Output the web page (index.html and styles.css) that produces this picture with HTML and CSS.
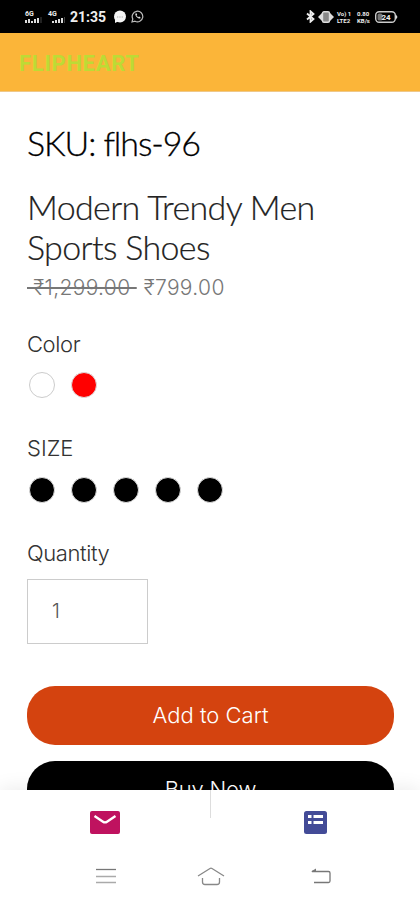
FILE: index.html
```html
<!DOCTYPE html>
<html lang="en">
<head>
  <meta charset="UTF-8">
  <meta name="viewport" content="width=device-width, initial-scale=1.0">
  <title>FLIPHEART</title>
  <link rel="stylesheet" href="styles.css">
</head>
<body>
  <div class="status-bar">
    <div class="status-left">
      <div class="signal">
        <span>6G</span>
        <svg width="17" height="6" viewBox="0 0 17 6"><path d="M1 6V3M4 6V2M7 6V4M10 6V2M13 6V1" stroke="#ddd" stroke-width="2"/><path d="M16 6V0" stroke="#444"/></svg>
      </div>
      <div class="signal second">
        <span>4G</span>
        <svg width="17" height="6" viewBox="0 0 17 6"><path d="M5 6V4M8 6V3M11 6V2M14 6V1" stroke="#ddd" stroke-width="2"/><path d="M16.5 6V0" stroke="#444"/></svg>
      </div>
      <span class="time">21:35</span>
      <svg class="chat" width="14" height="14" viewBox="0 0 14 14"><circle cx="7" cy="6.5" r="6" fill="#f5f5f5"/><path d="M2 9v4l4-2z" fill="#f5f5f5"/><path d="M4 7h6" stroke="#aaa" stroke-dasharray="1.3 1"/></svg>
      <svg class="whatsapp" width="13" height="13" viewBox="0 0 13 13" fill="none"><path d="M1 12l.8-3A5.3 5.3 0 1 1 4 11.2z" stroke="#bbb" stroke-width="1.2"/><path d="M4.5 3.5c-1 2 2.500 5.500 4.700 5l.3-1.300-1.500-.7-.8.7-1.700-1.800.7-.8-.7-1.300z" fill="#ddd"/></svg>
    </div>
    <div class="status-right">
      <svg width="9" height="13" viewBox="0 0 9 13" fill="none" stroke="#eee" stroke-width="1.800"><path d="M1 3.500l6.500 5.500-3 2.700V1.300L7.500 4 1 9.500"/></svg>
      <svg class="vibrate" width="16" height="12" viewBox="0 0 16 12"><path d="M0 6l4-4v8zM16 6l-4-4v8z" fill="#ddd"/><rect x="4.500" y=".7" width="7" height="10.600" rx="1.500" fill="#888" stroke="#ddd" stroke-width="1.400"/></svg>
      <div class="tiny volte"><span>Vo) 1</span><span>LTE2</span></div>
      <div class="tiny speed"><span>0.80</span><span>KB/s</span></div>
      <svg class="battery" width="23" height="12" viewBox="0 0 23 12"><rect x=".7" y=".7" width="19.600" height="10.600" rx="3.500" fill="none" stroke="#ccc" stroke-width="1.400"/><rect x="2.500" y="2.500" width="5" height="7" rx="1.500" fill="#777"/><path d="M21 3.500l1.500 2.500L21 8.500z" fill="#ddd"/><text x="6.500" y="9" class="battery-text">24</text></svg>
    </div>
  </div>

  <header class="app-bar">FLIPHEART</header>

  <main class="product">
    <h1 class="sku">SKU: flhs-96</h1>
    <h2 class="title">Modern Trendy Men<br>Sports Shoes</h2>
    <div class="price"><del>&nbsp;₹1,299.00&nbsp;</del><span>₹799.00</span></div>

    <div class="label color-label">Color</div>
    <div class="swatches">
      <span class="swatch white"></span>
      <span class="swatch red"></span>
    </div>

    <div class="label size-label">SIZE</div>
    <div class="swatches">
      <span class="swatch"></span>
      <span class="swatch"></span>
      <span class="swatch"></span>
      <span class="swatch"></span>
      <span class="swatch"></span>
    </div>

    <div class="label quantity-label">Quantity</div>
    <div class="quantity">1</div>

    <button class="btn add">Add to Cart</button>
    <button class="btn buy">Buy Now</button>
  </main>

  <footer class="bottom">
    <nav class="tabs">
      <div class="tab">
        <svg width="30" height="23" viewBox="0 0 30 23"><rect width="30" height="23" rx="2" fill="#bf125f"/><path d="M4.500 5L13 10.700q2 1.300 4 0L25.500 5" fill="none" stroke="#fff" stroke-width="2.400"/></svg>
      </div>
      <div class="divider"></div>
      <div class="tab">
        <svg width="23" height="23" viewBox="0 0 23 23"><rect width="23" height="23" rx="2.500" fill="#434b97"/><path d="M4 4h3.500v3H4zM9.500 4H19v3H9.500zM4 10h3.500v3H4zM9.500 10H19v3H9.500z" fill="#fff"/></svg>
      </div>
    </nav>
    <div class="system-nav">
      <svg width="20" height="16" viewBox="0 0 20 16"><path d="M0 1.500h20" stroke="#777" stroke-width="1.300"/><path d="M0 8.500h20M0 14.500h20" stroke="#aaa" stroke-width="1.500"/></svg>
      <svg class="home" width="28" height="19" viewBox="0 0 28 19" fill="none" stroke="#888" stroke-width="1.300"><path d="M1 9L13 1.500q1-.6 2 0L27 9M5.500 11v4q0 2.500 2.500 2.500h12q2.500 0 2.500-2.500v-4"/></svg>
      <svg width="20" height="16" viewBox="0 0 20 16" fill="none" stroke="#777" stroke-width="1.300"><path d="M1 3.500h16.500q1.500 0 1.500 1.500v8q0 1.500-1.500 1.500H3"/><path d="M0 3.500L5 .5v3z" fill="#777" stroke="none"/></svg>
    </div>
  </footer>
</body>
</html>
```
FILE: styles.css
```css
* {
  box-sizing: border-box;
}

body {
  margin: 0;
  height: 900px;
  display: flex;
  flex-direction: column;
  overflow: hidden;
  background: #fff;
  color: #222;
  font-family: Inter, "Liberation Sans", sans-serif;
}

svg {
  display: block;
  flex-shrink: 0;
}

.status-bar {
  height: 33px;
  flex-shrink: 0;
  padding: 0 22px 0 25px;
  background: #000;
  color: #eee;
  display: flex;
  justify-content: space-between;
  align-items: center;
}

.status-left,
.status-right {
  display: flex;
  align-items: center;
}

.signal {
  width: 18px;
  height: 12px;
  font: bold 7px/6px Roboto, sans-serif;
}

.signal span {
  display: block;
}

.second {
  margin-left: 5px;
}

.time {
  width: 38px;
  margin-left: 4px;
  font: bold 14px/16px Roboto, sans-serif;
}

.chat {
  margin-left: 5px;
}

.whatsapp {
  margin-left: 4px;
}

.vibrate {
  margin-left: 3px;
}

.tiny {
  width: 16px;
  margin-left: 4px;
  font: bold 6px/7px Roboto, sans-serif;
  white-space: nowrap;
}

.tiny span {
  display: block;
}

.volte {
  margin-left: 3px;
}

.battery {
  margin-left: 2px;
}

.battery-text {
  font: bold 8px Roboto, sans-serif;
  fill: #eee;
}

.app-bar {
  height: 59px;
  flex-shrink: 0;
  padding: 3px 19px 0;
  display: flex;
  align-items: center;
  background: #fbb539;
  border-bottom: 1px solid #efc889;
  color: #bddb35;
  font: bold 22px/26px Roboto, sans-serif;
  letter-spacing: 0.7px;
}

.product {
  flex: 1;
  min-height: 0;
  overflow: hidden;
  padding: 30px 26px 0 27px;
}

.sku,
.title {
  margin: 0;
  font-family: Lato, sans-serif;
  font-weight: 300;
}

.sku {
  color: #000;
  font-size: 34px;
  line-height: 42px;
  letter-spacing: -1.1px;
  -webkit-text-stroke: 0.3px #000;
}

.title {
  margin-top: 23px;
  color: #222;
  font-size: 34px;
  line-height: 40px;
  letter-spacing: -0.65px;
  -webkit-text-stroke: 0.2px #222;
  white-space: nowrap;
}

.price {
  margin-top: 7px;
  height: 27px;
  display: flex;
  gap: 7px;
  color: #777;
  font-weight: 300;
  font-size: 21px;
  line-height: 27px;
  letter-spacing: 0.35px;
}

.label {
  color: #333;
  font-weight: 300;
  font-size: 22px;
  line-height: 28px;
  letter-spacing: -0.4px;
}

.color-label {
  margin-top: 29px;
}

.swatches {
  height: 28px;
  margin: 14px 0 0 2px;
  display: flex;
  gap: 16px;
}

.swatch {
  width: 26px;
  height: 26px;
  border: 1px solid #ddd;
  border-radius: 50%;
  background: #000;
}

.white {
  background: #fff;
  border-color: #ccc;
}

.red {
  background: #f00;
}

.size-label,
.quantity-label {
  margin-top: 34px;
}

.size-label {
  letter-spacing: 0;
}

.size-label + .swatches {
  margin-top: 15px;
}

.quantity {
  width: 121px;
  height: 65px;
  margin-top: 12px;
  padding: 0 24px;
  border: 1px solid #ccc;
  color: #555;
  font-weight: 300;
  font-size: 20px;
  line-height: 63px;
}

.btn {
  display: block;
  width: 100%;
  height: 59px;
  border: 0;
  padding: 0;
  border-radius: 28px;
  color: #fff;
  font: 300 22px/59px Inter, "Liberation Sans", sans-serif;
}

.add {
  margin-top: 42px;
  background: #d4430f;
}

.buy {
  margin-top: 16px;
  background: #000;
  line-height: 56px;
  padding-bottom: 3px;
  letter-spacing: -0.2px;
}

.bottom {
  height: 110px;
  flex-shrink: 0;
  background: #fff;
  box-shadow: 0 -2px 18px rgba(0, 0, 0, 0.08);
}

.tabs {
  height: 64px;
  display: flex;
}

.tab {
  flex: 1;
  height: 64px;
  display: flex;
  align-items: center;
  justify-content: center;
}

.divider {
  width: 1px;
  height: 28px;
  background: #ddd;
}

.system-nav {
  height: 44px;
  display: flex;
  justify-content: space-between;
  align-items: center;
  padding: 0 89px 0 96px;
}

.home {
  margin-right: 5px;
}
```
